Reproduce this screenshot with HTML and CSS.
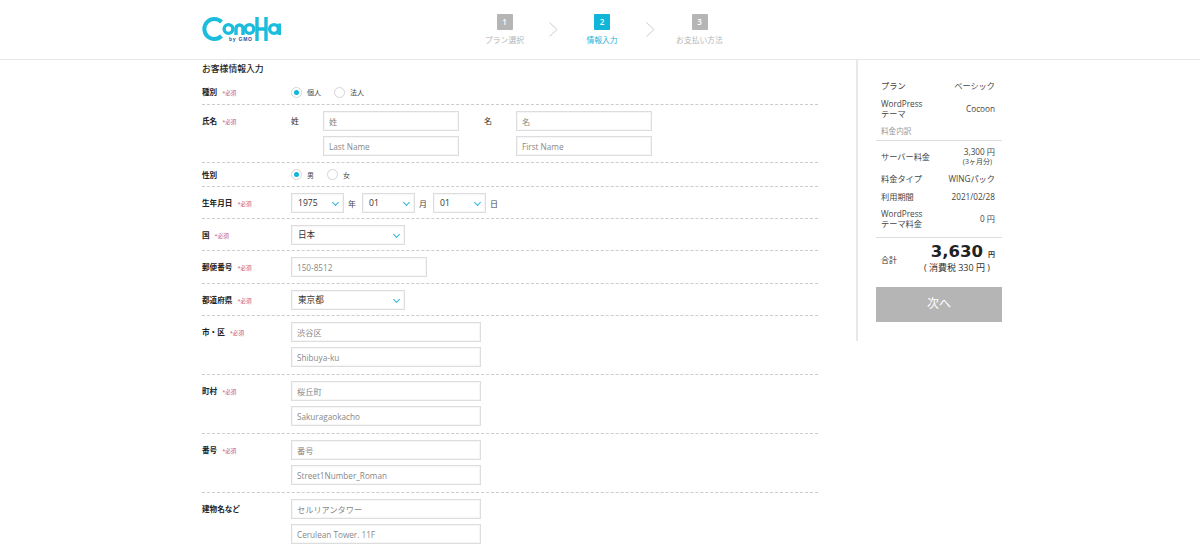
FILE: index.html
```html
<!DOCTYPE html>
<html lang="ja">
<head>
  <meta charset="UTF-8" />
  <title>お客様情報入力</title>
  <link rel="stylesheet" href="styles.css">
</head>
<body>
  <header class="header">
    <svg class="logo" width="80" height="25" viewBox="0 0 80 25" fill="none" stroke="#1bbcdc" stroke-width="3.4">
      <path d="M19.5 5 A10 10 0 1 0 19.5 19" stroke-width="4"/>
      <circle cx="26.5" cy="12" r="4.4"/>
      <path d="M34 18 V11.5 a3.5 3.5 0 0 1 7 0 V18"/>
      <circle cx="47.5" cy="12" r="4.4"/>
      <path d="M55 0 V24 M64 0 V24 M55 12 H64"/>
      <circle cx="72" cy="12" r="4.4"/>
      <path d="M77.3 6.5 V18"/>
      <text x="27" y="24" font-size="5" font-family="Liberation Sans, sans-serif" font-weight="700" fill="#1d4f9c" stroke="none" textLength="23">by GMO</text>
    </svg>
    <ol class="steps">
      <li class="step"><span class="step-num">1</span><span class="step-name">プラン選択</span></li>
      <li class="step-arrow"><svg width="9" height="15" viewBox="0 0 9 15" fill="none" stroke="#ccc"><path d="M0.5 0.5 L8 7.5 L0.5 14.5"/></svg></li>
      <li class="step active"><span class="step-num">2</span><span class="step-name">情報入力</span></li>
      <li class="step-arrow"><svg width="9" height="15" viewBox="0 0 9 15" fill="none" stroke="#ccc"><path d="M0.5 0.5 L8 7.5 L0.5 14.5"/></svg></li>
      <li class="step"><span class="step-num">3</span><span class="step-name">お支払い方法</span></li>
    </ol>
  </header>

  <div class="page">
    <main class="form">
      <h1 class="form-title">お客様情報入力</h1>

      <div class="row row-type">
        <div class="label">種別<span class="req">*必須</span></div>
        <div class="radios">
          <span class="radio checked"></span><span class="radio-text">個人</span>
          <span class="radio"></span><span class="radio-text">法人</span>
        </div>
      </div>

      <div class="row">
        <div class="label">氏名<span class="req">*必須</span></div>
        <div class="name-grid">
          <span class="name-label">姓</span>
          <div class="stack">
            <input class="input w-136" placeholder="姓">
            <input class="input w-136" placeholder="Last Name">
          </div>
          <span class="name-label">名</span>
          <div class="stack">
            <input class="input w-136" placeholder="名">
            <input class="input w-136" placeholder="First Name">
          </div>
        </div>
      </div>

      <div class="row row-gender">
        <div class="label">性別</div>
        <div class="radios">
          <span class="radio checked"></span><span class="radio-text">男</span>
          <span class="radio"></span><span class="radio-text">女</span>
        </div>
      </div>

      <div class="row row-select">
        <div class="label">生年月日<span class="req">*必須</span></div>
        <div class="birth">
          <div class="select w-53"><select><option>1975</option></select></div><span class="unit">年</span>
          <div class="select w-53"><select><option>01</option></select></div><span class="unit">月</span>
          <div class="select w-53"><select><option>01</option></select></div><span class="unit">日</span>
        </div>
      </div>

      <div class="row row-select">
        <div class="label">国<span class="req">*必須</span></div>
        <div class="select w-114"><select><option>日本</option></select></div>
      </div>

      <div class="row">
        <div class="label">郵便番号<span class="req">*必須</span></div>
        <input class="input w-136" placeholder="150-8512">
      </div>

      <div class="row row-select">
        <div class="label">都道府県<span class="req">*必須</span></div>
        <div class="select w-114"><select><option>東京都</option></select></div>
      </div>

      <div class="row row-address">
        <div class="label">市・区<span class="req">*必須</span></div>
        <div class="stack">
          <input class="input w-190" placeholder="渋谷区">
          <input class="input w-190" placeholder="Shibuya-ku">
        </div>
      </div>

      <div class="row row-address">
        <div class="label">町村<span class="req">*必須</span></div>
        <div class="stack">
          <input class="input w-190" placeholder="桜丘町">
          <input class="input w-190" placeholder="Sakuragaokacho">
        </div>
      </div>

      <div class="row row-address">
        <div class="label">番号<span class="req">*必須</span></div>
        <div class="stack">
          <input class="input w-190" placeholder="番号">
          <input class="input w-190" placeholder="Street1Number_Roman">
        </div>
      </div>

      <div class="row row-address">
        <div class="label">建物名など</div>
        <div class="stack">
          <input class="input w-190" placeholder="セルリアンタワー">
          <input class="input w-190" placeholder="Cerulean Tower. 11F">
        </div>
      </div>
    </main>

    <aside class="side">
      <dl class="sum">
        <div class="sum-row h-18"><dt>プラン</dt><dd>ベーシック</dd></div>
        <div class="sum-row h-28"><dt>WordPress<br>テーマ</dt><dd>Cocoon</dd></div>
      </dl>
      <p class="sum-head">料金内訳</p>
      <dl class="sum sum-list">
        <div class="sum-row h-26"><dt>サーバー料金</dt><dd>3,300 円<small>(3ヶ月分)</small></dd></div>
        <div class="sum-row h-18"><dt>料金タイプ</dt><dd>WINGパック</dd></div>
        <div class="sum-row h-18"><dt>利用期間</dt><dd>2021/02/28</dd></div>
        <div class="sum-row h-26"><dt>WordPress<br>テーマ料金</dt><dd>0 円</dd></div>
      </dl>
      <div class="total">
        <span class="total-label">合計</span>
        <div class="total-value">
          <div><strong>3,630</strong><span class="yen">円</span></div>
          <div class="tax">( 消費税 330 円 )</div>
        </div>
      </div>
      <button class="next">次へ</button>
    </aside>
  </div>
</body>
</html>
```

FILE: styles.css
```css
* { box-sizing: border-box; }
html, body {
  margin: 0;
  height: 544px;
  overflow: hidden;
}
body {
  background: #fff;
  color: #333;
  font-family: "Open Sans", "Noto Sans CJK JP", sans-serif;
  font-size: 8px;
}

/* header */
.header {
  display: flex;
  align-items: flex-start;
  height: 60px;
  padding-left: 202px;
  border-bottom: 1px solid #e6e6e6;
}
.logo {
  margin-top: 17px;
  flex: none;
  overflow: visible;
}
.steps {
  display: flex;
  margin: 14px 0 0 187.5px;
  padding: 0;
  list-style: none;
}
.step {
  display: flex;
  flex-direction: column;
  align-items: center;
  width: 70px;
  color: #b5b5b5;
}
.step-num {
  width: 16px;
  height: 16px;
  background: #b5b5b5;
  border-radius: 1px;
  color: #fff;
  font-size: 8px;
  font-weight: 600;
  line-height: 16px;
  text-align: center;
}
.step-name {
  margin-top: 4px;
  font-size: 7.8px;
  line-height: 12px;
}
.active { color: #1bb4d8; }
.active .step-num { background: #10b5d8; }
.step-arrow {
  width: 27.5px;
  padding: 8px 0 0 9px;
}

/* form */
.page {
  display: flex;
  padding-left: 202px;
}
.form { width: 616px; }
.form-title {
  margin: 0;
  height: 18px;
  font-size: 8.8px;
  font-weight: 500;
  line-height: 18px;
  color: #222;
}
.row {
  display: grid;
  grid-template-columns: 89px 1fr;
  padding: 6px 0;
  border-bottom: 1px dashed #ccc;
}
.row-type {
  align-items: center;
  height: 27px;
  padding: 7px 0 5px;
}
.row-gender {
  align-items: center;
  height: 24px;
  padding: 0;
}
.row-select { padding: 6px 0 5px; }
.row-address { padding: 6px 0 7px; }
.label {
  height: 20px;
  font-size: 7.6px;
  font-weight: 700;
  line-height: 20px;
  color: #222;
  white-space: nowrap;
}
.row-type .label, .row-gender .label {
  height: 14px;
  line-height: 14px;
}
.req {
  margin-left: 5px;
  font-size: 5.6px;
  font-weight: 400;
  color: #c4557a;
}
.radios {
  display: flex;
  align-items: center;
}
.radio {
  position: relative;
  width: 11px;
  height: 11px;
  border: 1px solid #d5d5d5;
  border-radius: 50%;
  background: #fff;
}
.radio.checked::after {
  content: "";
  position: absolute;
  left: 2px;
  top: 2px;
  width: 5px;
  height: 5px;
  border-radius: 50%;
  background: #10b5d8;
}
.radio-text {
  margin: 0 13px 0 5px;
  font-size: 7px;
  color: #444;
}
.name-grid {
  display: grid;
  grid-template-columns: 32px 136px 25px 32px 136px;
}
.name-grid .name-label:nth-child(3) { grid-column: 4; }
.name-label {
  font-size: 8px;
  line-height: 20px;
}
.stack {
  display: flex;
  flex-direction: column;
  gap: 5px;
}
.input, .select select {
  height: 20px;
  padding: 0 5px;
  border: 1px solid #ddd;
  box-shadow: inset 0 0 0 1px #f6f6f6;
  border-radius: 0;
  background: #fff;
  font-family: "Open Sans", "Noto Sans CJK JP", sans-serif;
  font-size: 8.2px;
  color: #444;
}
.input::placeholder {
  color: #888;
  opacity: 1;
}
.w-53 { width: 53px; }
.w-114 { width: 114px; }
.w-136 { width: 136px; }
.w-190 { width: 190px; }
.select {
  position: relative;
  height: 20px;
}
.select select {
  display: block;
  width: 100%;
  padding: 0 0 1px 6px;
  appearance: none;
  font-size: 8.6px;
  color: #333;
}
.select::after {
  content: "";
  position: absolute;
  right: 6px;
  top: 7px;
  width: 4px;
  height: 4px;
  border-right: 1.5px solid #2bb8da;
  border-bottom: 1.5px solid #2bb8da;
  transform: rotate(45deg);
}
.birth {
  display: flex;
  align-items: center;
}
.unit {
  width: 18px;
  padding-left: 4px;
  font-size: 8px;
  color: #444;
}

/* summary */
.side {
  width: 146px;
  height: 281px;
  margin-left: 38px;
  padding: 17px 0 0 18px;
  border-left: 2px solid #e8e8e8;
}
.sum {
  margin: 0;
  padding: 0 7px 0 5px;
}
.sum-row {
  display: flex;
  justify-content: space-between;
  align-items: center;
  color: #444;
  font-size: 8.2px;
  line-height: 10px;
}
.sum-row dt { margin: 0; }
.sum-row dd {
  margin: 0;
  text-align: right;
}
.sum-row small {
  display: block;
  margin-right: 3px;
  font-size: 7px;
}
.h-18 { height: 18px; }
.h-26 { height: 26px; }
.h-28 { height: 28px; }
.sum-head {
  height: 18px;
  margin: 0;
  padding: 0 5px;
  border-bottom: 1px solid #ddd;
  color: #999;
  font-size: 7.6px;
  line-height: 16px;
}
.sum-list {
  height: 97px;
  padding-top: 3px;
  border-bottom: 1px solid #ddd;
}
.total {
  display: flex;
  justify-content: space-between;
  align-items: center;
  height: 49px;
  padding: 0 7px 6px 5px;
  font-size: 8px;
  color: #333;
}
.total-value {
  margin-bottom: 4px;
  text-align: right;
}
.total-value strong {
  font-family: "DejaVu Sans", sans-serif;
  font-size: 16.5px;
  line-height: 20px;
  color: #222;
}
.yen {
  margin-left: 5px;
  font-size: 7px;
  font-weight: 700;
}
.tax {
  margin-right: 5px;
  font-size: 9px;
  line-height: 11px;
}
.next {
  display: block;
  width: 126px;
  height: 35px;
  padding: 0 0 3px;
  border: none;
  background: #b5b5b5;
  color: #fff;
  font-family: "Open Sans", "Noto Sans CJK JP", sans-serif;
  font-size: 12px;
}
```
